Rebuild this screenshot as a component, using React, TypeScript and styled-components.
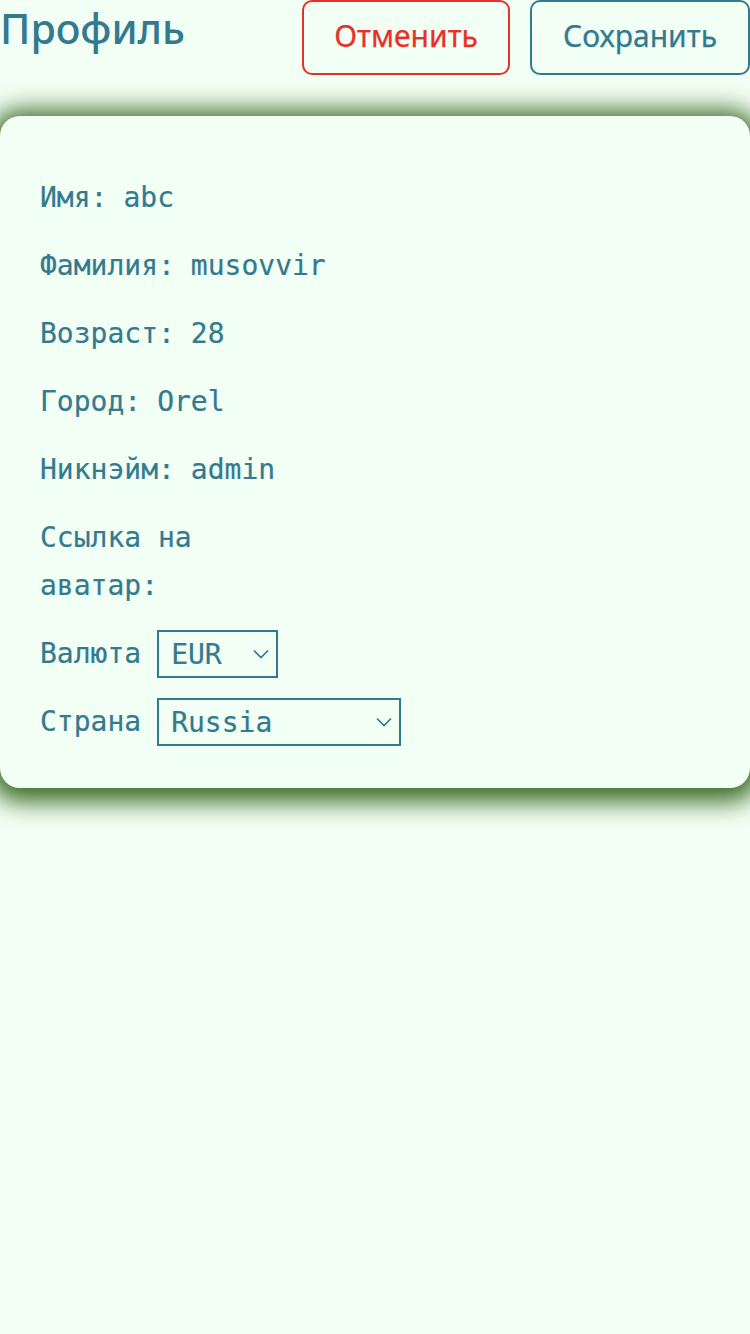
import React from "react";
import styled, { createGlobalStyle } from "styled-components";

const TEXT = "#347a8e";
const RED = "#e8302a";
const BG = "#f2fff4";

const GlobalStyle = createGlobalStyle`
  html, body {
    margin: 0;
    padding: 0;
    background: ${BG};
  }
  body {
    font-family: "Noto Sans", "Open Sans", sans-serif;
    color: ${TEXT};
  }
  * { box-sizing: border-box; }
`;

const Page = styled.div`
  min-height: 1334px;
  background: ${BG};
  display: flex;
  flex-direction: column;
  gap: 41px;
`;

const Header = styled.header`
  display: flex;
  justify-content: space-between;
  align-items: flex-start;
  height: 75px;
`;

const Title = styled.h1`
  margin: 0;
  font-family: "Noto Sans", "Open Sans", sans-serif;
  font-weight: 500;
  font-size: 41px;
  line-height: 56px;
  color: ${TEXT};
`;

const Actions = styled.div`
  display: flex;
  gap: 20px;
`;

const Button = styled.button<{ $danger?: boolean }>`
  height: 75px;
  padding: 0 ${(p) => (p.$danger ? 30 : 31)}px 3px;
  border: 2px solid ${(p) => (p.$danger ? RED : TEXT)};
  border-radius: 10px;
  background: transparent;
  color: ${(p) => (p.$danger ? RED : TEXT)};
  font-family: "Noto Sans", "Open Sans", sans-serif;
  font-weight: 400;
  font-size: 30px;
  line-height: 1;
  -webkit-text-stroke: 0.25px ${(p) => (p.$danger ? RED : TEXT)};
  cursor: pointer;
`;

const Card = styled.section`
  background: ${BG};
  border-radius: 20px;
  box-shadow: 0 4px 24px 10px #3c6c29;
  padding: 58px 40px 42px;
  display: flex;
  flex-direction: column;
  gap: 20px;
`;

const Row = styled.div`
  display: flex;
  align-items: flex-start;
  gap: 16px;
  font-family: "DejaVu Sans Mono", "Liberation Mono", monospace;
  font-size: 28px;
  line-height: 48px;
  color: ${TEXT};
  -webkit-text-stroke: 0.2px ${TEXT};
`;

const SelectRow = styled(Row)`
  align-items: center;
`;

const Label = styled.span<{ $max?: number }>`
  max-width: ${(p) => (p.$max ? `${p.$max}px` : "none")};
`;

const Value = styled.span``;

const SelectWrap = styled.div<{ $w: number }>`
  position: relative;
  width: ${(p) => p.$w}px;
  height: 48px;
`;

const Select = styled.select`
  appearance: none;
  -webkit-appearance: none;
  width: 100%;
  height: 100%;
  margin: 0;
  padding: 0 0 0 12px;
  border: 2px solid ${TEXT};
  border-radius: 0;
  background: transparent;
  color: ${TEXT};
  font-family: "DejaVu Sans Mono", "Liberation Mono", monospace;
  font-size: 28px;
  -webkit-text-stroke: 0.2px ${TEXT};
  outline: none;
`;

const Chevron = styled.svg`
  position: absolute;
  right: 9px;
  top: 50%;
  transform: translateY(-50%);
  pointer-events: none;
`;

const ChevronIcon = () => (
  <Chevron width="16" height="10" viewBox="0 0 16 10">
    <path d="M1 1.5 L8 8.5 L15 1.5" fill="none" stroke={TEXT} strokeWidth="1.7" />
  </Chevron>
);

const fields: [string, string][] = [
  ["Имя:", "abc"],
  ["Фамилия:", "musovvir"],
  ["Возраст:", "28"],
  ["Город:", "Orel"],
  ["Никнэйм:", "admin"],
];

export default function App() {
  return (
    <>
      <GlobalStyle />
      <Page>
        <Header>
          <Title>Профиль</Title>
          <Actions>
            <Button $danger>Отменить</Button>
            <Button>Сохранить</Button>
          </Actions>
        </Header>
        <Card>
          {fields.map(([l, v]) => (
            <Row key={l}>
              <Label>{l}</Label>
              <Value>{v}</Value>
            </Row>
          ))}
          <Row>
            <Label $max={200}>Ссылка на аватар:</Label>
          </Row>
          <SelectRow>
            <Label>Валюта</Label>
            <SelectWrap $w={121}>
              <Select defaultValue="EUR">
                <option>EUR</option>
                <option>USD</option>
                <option>RUB</option>
              </Select>
              <ChevronIcon />
            </SelectWrap>
          </SelectRow>
          <SelectRow>
            <Label>Страна</Label>
            <SelectWrap $w={244}>
              <Select defaultValue="Russia">
                <option>Russia</option>
                <option>Belarus</option>
              </Select>
              <ChevronIcon />
            </SelectWrap>
          </SelectRow>
        </Card>
      </Page>
    </>
  );
}
